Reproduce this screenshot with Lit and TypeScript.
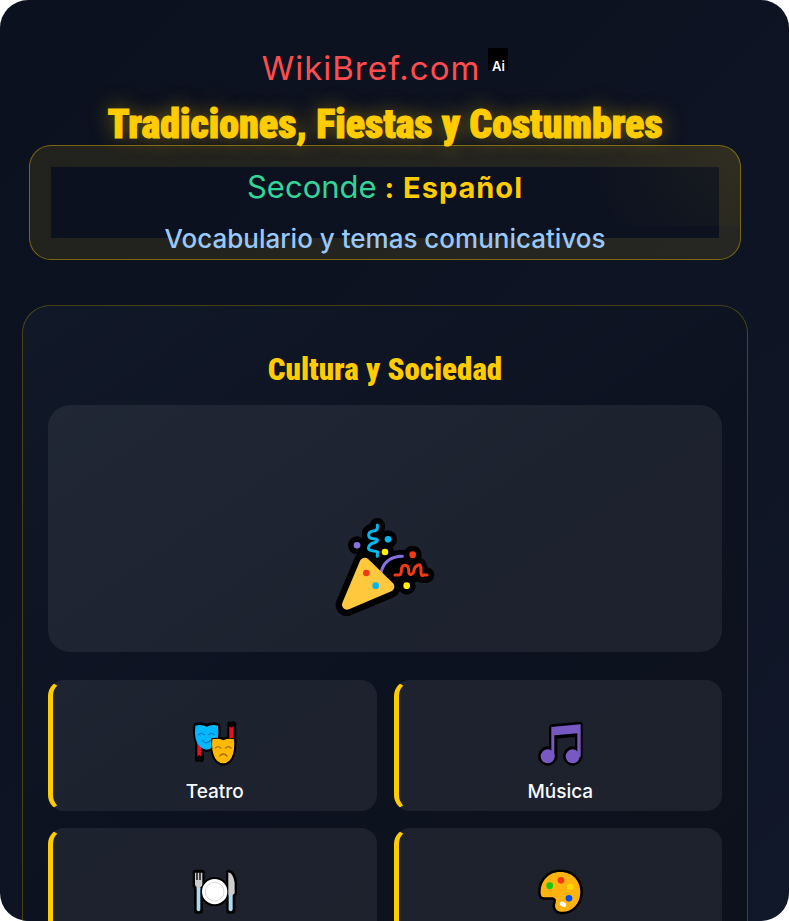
import { LitElement, html, css, svg } from "lit";
import { customElement, property } from "lit/decorators.js";

const party = svg`
  <g fill="#000" stroke="#000" stroke-width="46" stroke-linecap="round" stroke-linejoin="round">
    <path d="M172 62V66C172 78 148 74 148 88S172 98 172 110 148 112 148 126 172 136 172 154" fill="none"/>
    <path d="M111 121h.1M204 103h.1M195 141h.1M278 149h.1M260 242h.1" stroke-width="54"/>
    <path d="M183 200Q197 155 247 153" fill="none" stroke-width="38"/>
    <path d="M224 210H244L254 181 266 208 284 208 296 181 306 210H320"/>
    <path d="M134 172 80 300 209 246Z" stroke-width="66"/>
    <path d="M200 160 270 160 250 235 200 220Z" stroke-width="20"/>
  </g>
  <g fill="none" stroke-width="9" stroke-linecap="round" stroke-linejoin="round">
    <path stroke="#00b8ef" d="M172 60V68Q172 76 160 78 146 80 146 90T160 101 172 107 160 114 146 126 160 138 172 145V154"/>
    <path stroke="#8870df" d="M183 202Q195 155 247 154"/>
    <path stroke="#f03a17" d="M225 210H236Q244 210 244 198 244 181 255 181T266 196 274 208 282 196 293 181 303 196 311 210H321"/>
  </g>
  <path d="M134 173 81 299 208 245Z" fill="#ffc83d" stroke="#ffc83d" stroke-width="30" stroke-linejoin="round"/>
  <circle cx="111" cy="121" r="10" fill="#8870df"/><circle cx="204" cy="103" r="10" fill="#00b8ef"/>
  <circle cx="195" cy="141" r="10" fill="#fff100"/><circle cx="278" cy="149" r="10" fill="#f03a17"/>
  <circle cx="260" cy="242" r="10" fill="#fff100"/><circle cx="139" cy="204" r="10" fill="#f03a17"/>
  <circle cx="167" cy="242" r="10" fill="#00b8ef"/>`;

const masks = svg`
  <g fill="#000" stroke="#000" stroke-width="16" stroke-linejoin="round">
    <path d="M53 82 53 148 58 142 64 148V100Z"/>
    <path d="M150 42 155 49 161 42V100H150Z"/>
    <path d="M48 46Q65 42 80 50Q96 42 113 46Q118 90 97 110Q80 124 64 110Q43 93 48 46Z"/>
    <path d="M100 90Q116 84 130 91Q145 84 160 88Q164 130 147 151Q130 167 112 151Q96 132 100 90Z"/>
  </g>
  <path d="M52 82 52 140 58 134 64 140V105Z" fill="#e81224"/>
  <path d="M148 48 154 54 161 48V98H148Z" fill="#e81224"/>
  <path d="M46 47Q65 42 80 50Q96 42 114 47Q120 92 98 112Q80 126 62 112Q40 93 46 47Z" fill="#00b8ff"/>
  <path d="M56 74Q64 66 73 74M86 74Q94 66 103 74M68 92Q79 105 91 92" fill="none" stroke="#0078c8" stroke-width="4" stroke-linecap="round"/>
  <path d="M94 84H101Q116 82 130 88Q145 82 163 85Q166 130 147 151Q130 169 112 151Q92 132 94 84Z" fill="#000"/>
  <path d="M97 88Q116 84 130 91Q145 84 162 88Q166 132 148 152Q130 168 111 152Q93 132 97 88Z" fill="#ffb900"/>
  <path d="M106 114Q114 106 122 114M137 114Q145 106 153 114M119 138Q130 126 141 138" fill="none" stroke="#a86c18" stroke-width="4" stroke-linecap="round"/>`;

const note = svg`
  <g stroke="#000" stroke-width="14" stroke-linejoin="round" fill="#000">
    <circle cx="83" cy="138" r="22"/><circle cx="158" cy="138" r="22"/>
    <path d="M94 50 181 42V140H172V73L105 79V140H94Z"/>
  </g>
  <g fill="#7859c4"><circle cx="83" cy="139" r="21"/><circle cx="158" cy="139" r="21"/>
  <path d="M94 51 182 43V140H172V70L103 76V140H94Z"/></g>`;

const meal = svg`
  <g stroke="#000" stroke-width="16" stroke-linejoin="round" fill="#000">
    <circle cx="104" cy="95" r="36"/>
    <path d="M46 37H66V78L61 84V153H50V84L46 78Z"/>
    <path d="M146 37Q160 40 163 66V100H158V153H147Z"/>
  </g>
  <circle cx="104" cy="95" r="38" fill="#fff"/>
  <circle cx="104" cy="95" r="28" fill="#fff" stroke="#d8d8d8" stroke-width="3"/>
  <path d="M45 38H49V60H53V38H58V60H62V38H67V72Q67 80 61 82V86H50V82Q45 78 45 72Z" fill="#ccc"/>
  <path d="M50 83H61V149Q56 159 50 149Z" fill="#a8dcf5"/>
  <path d="M145 37Q160 40 164 68V100L158 105H145Z" fill="#ccc"/>
  <path d="M146 105H158V149Q152 159 146 149Z" fill="#a8dcf5"/>`;

const palette = svg`
  <path d="M48 106C42 68 68 36 106 36C144 36 167 64 166 98C165 133 139 157 109 155C92 154 87 140 92 128C95 119 91 112 80 112H58Q49 112 48 106Z"
    fill="#ffb30f" stroke="#000" stroke-width="15" paint-order="stroke" stroke-linejoin="round"/>
  <circle cx="74" cy="77" r="10" fill="#16c60c"/><circle cx="108" cy="61" r="10" fill="#f03a17"/>
  <circle cx="136" cy="81" r="10" fill="#ffd800"/><circle cx="132" cy="115" r="10" fill="#0050f0"/>
  <ellipse cx="114" cy="133" rx="10" ry="7" fill="#fff" transform="rotate(30 114 133)"/>`;

@customElement("topic-card")
class TopicCard extends LitElement {
  @property() label = "";
  @property() box = "";
  @property({ attribute: false }) art: unknown;

  static styles = css`
    :host {
      display: flex;
      flex-direction: column;
      align-items: center;
      box-sizing: border-box;
      min-height: 131px;
      padding: 38px 16px 0;
      border: solid transparent;
      border-width: 3px 0 3px 5px;
      border-left-color: #ffcc00;
      border-radius: 16px;
      background: rgba(255, 255, 255, 0.07);
    }
    .art { width: 46px; height: 46px; }
    .label {
      margin: 11px 0 0;
      font-size: 19px;
      font-weight: 500;
      line-height: 28px;
      color: #f8fafc;
    }
  `;

  render() {
    return html`<svg class="art" viewBox=${this.box} aria-hidden="true">${this.art}</svg>
      ${this.label ? html`<h3 class="label">${this.label}</h3>` : null}`;
  }
}

@customElement("app-root")
class AppRoot extends LitElement {
  static styles = css`
    :host {
      display: block;
      background: #fff;
      font-family: Inter, "Noto Sans", sans-serif;
    }
    .page {
      box-sizing: border-box;
      height: 100vh;
      overflow: hidden;
      padding: 48px 41px 0 22px;
      border-radius: 28px;
      background: linear-gradient(135deg, #0b111e 0%, #0c1220 35%, #111829 100%);
      text-align: center;
    }
    .brand {
      display: flex;
      justify-content: center;
      align-items: flex-start;
      gap: 8px;
    }
    .name {
      font-size: 33px;
      line-height: 40px;
      letter-spacing: 1px;
      color: #ff4d4f;
      text-decoration: none;
    }
    .badge {
      box-sizing: border-box;
      width: 20px;
      height: 22px;
      padding-top: 8px;
      background: #000;
      color: #fff;
      font-size: 13px;
      line-height: 20px;
      font-weight: 600;
    }
    .title, .section {
      margin: 0;
      color: #ffcc00;
      font-family: "Roboto Condensed", "Liberation Sans Narrow", Roboto, sans-serif;
      font-weight: 900;
    }
    .title {
      margin-top: 17px;
      font-size: 40px;
      line-height: 40px;
      -webkit-text-stroke: 1px #ffcc00;
      text-shadow: 0 0 20px rgba(255, 204, 0, 0.5);
    }
    .course {
      margin: 0 7px;
      padding: 21px;
      border: 1px solid rgba(255, 204, 0, 0.4);
      border-radius: 22px;
      background:
        radial-gradient(circle at 100% 0, rgba(255, 204, 0, 0.05), transparent 70%) top right / 200px 80px no-repeat,
        linear-gradient(120deg, #0c111f, #0d1220) content-box,
        linear-gradient(120deg, #21221e, #262622);
    }
    .level {
      margin: 0;
      font-size: 29px;
      line-height: 40px;
      letter-spacing: 1px;
      font-weight: 700;
      color: #ffcc00;
    }
    .grade { font-size: 31px; font-weight: 400; letter-spacing: 0; color: #34d399; }
    .about {
      margin: 11px 0 -21px;
      font-size: 26px;
      font-weight: 500;
      line-height: 40px;
      color: #99c9fc;
    }
    .panel {
      margin-top: 45px;
      padding: 44px 25px 25px;
      border: 1px solid rgba(255, 204, 0, 0.25);
      border-radius: 28px;
      background: linear-gradient(145deg, #111827, #0c1220 50%, #0d111b);
    }
    .section { font-size: 31px; line-height: 40px; }
    .hero {
      display: flex;
      justify-content: center;
      margin: 15px 0 28px;
      padding: 112px 0 35px;
      border-radius: 22px;
      background: rgba(255, 255, 255, 0.07);
    }
    .party { width: 100px; height: 100px; }
    .topics {
      display: grid;
      grid-template-columns: 1fr 1fr;
      gap: 17px;
    }
  `;

  render() {
    return html`<main class="page">
      <header>
        <div class="brand"><a class="name" href="#">WikiBref.com</a><span class="badge">Ai</span></div>
        <h1 class="title">Tradiciones, Fiestas y Costumbres</h1>
        <div class="course">
          <p class="level"><span class="grade">Seconde</span> : Español</p>
          <p class="about">Vocabulario y temas comunicativos</p>
        </div>
      </header>
      <section class="panel">
        <h2 class="section">Cultura y Sociedad</h2>
        <div class="hero"><svg class="party" viewBox="45 36 300 300" aria-hidden="true">${party}</svg></div>
        <div class="topics">
          <topic-card label="Teatro" box="36 33 138 138" .art=${masks}></topic-card>
          <topic-card label="Música" box="51 33 138 138" .art=${note}></topic-card>
          <topic-card box="36 27 138 138" .art=${meal}></topic-card>
          <topic-card box="36 27 138 138" .art=${palette}></topic-card>
        </div>
      </section>
    </main>`;
  }
}
